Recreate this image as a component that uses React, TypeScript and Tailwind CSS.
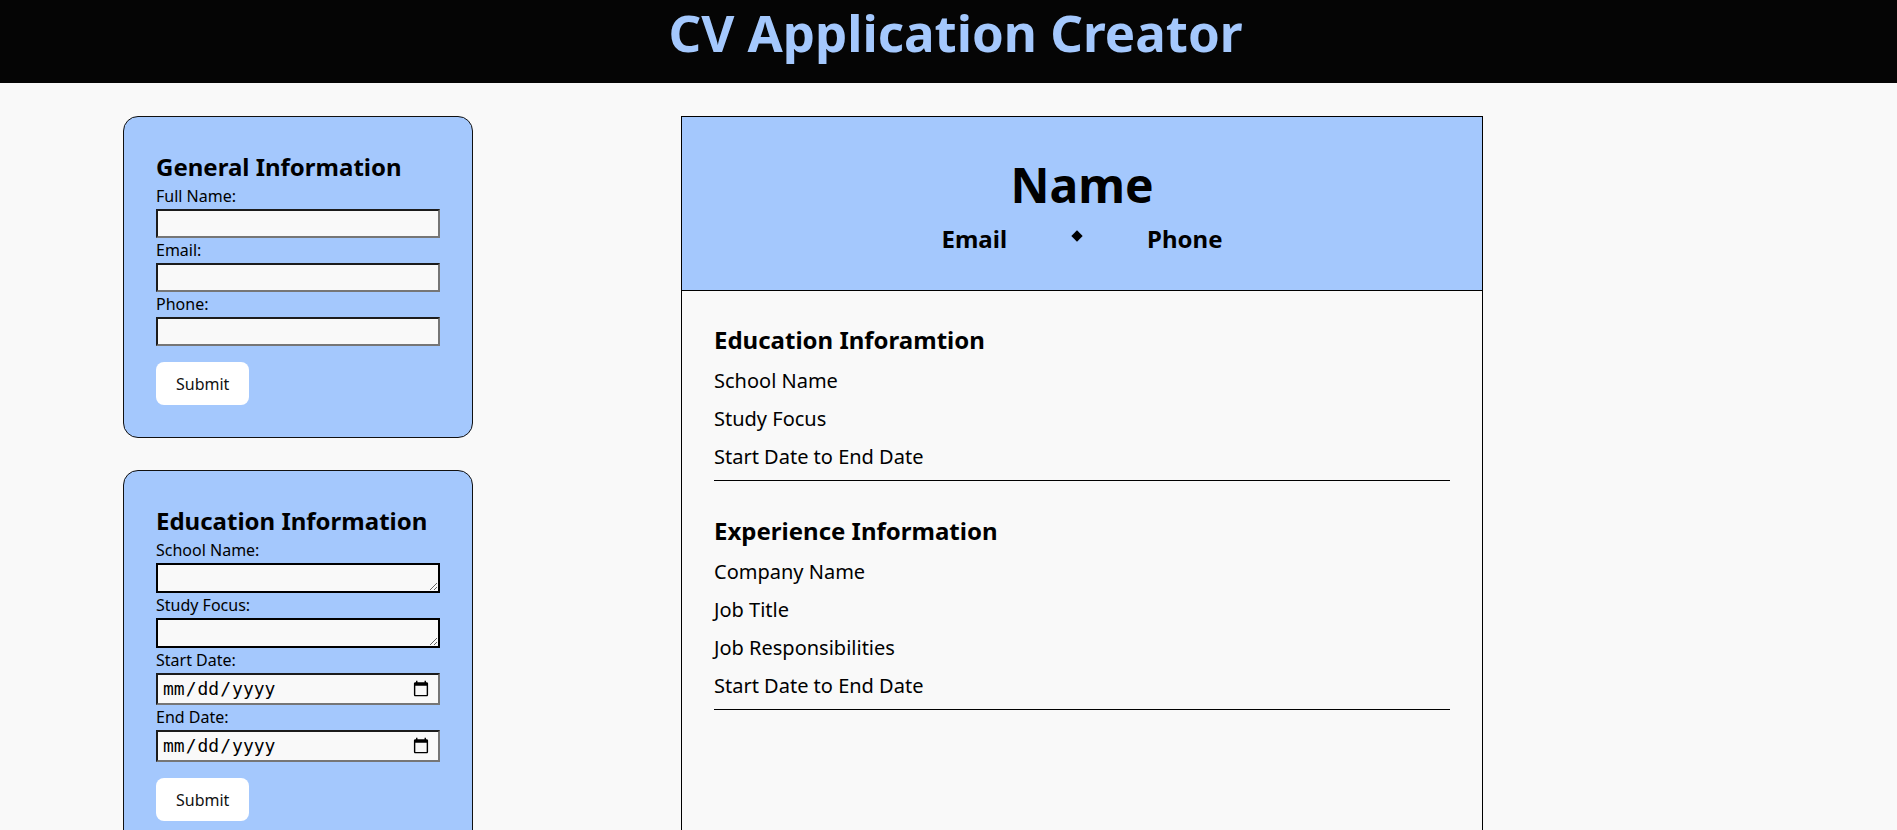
import React from 'react';

const inputClass =
  'block w-full h-[29px] bg-[#f9f9f9] border-2 border-t-[#1c1c1c] border-l-[#1c1c1c] border-b-[#767676] border-r-[#767676] px-1 text-base outline-none';

const textareaClass =
  'block w-full h-[30px] bg-[#f9f9f9] border-2 border-black px-1 text-sm resize-y outline-none font-["DejaVu_Sans_Mono",monospace]';

const dateClass =
  'block w-full h-[32px] bg-[#f9f9f9] border-2 border-t-[#1c1c1c] border-l-[#1c1c1c] border-b-[#767676] border-r-[#767676] pl-[4px] pr-[6px] text-[18px] leading-[22px] outline-none font-["DejaVu_Sans_Mono",monospace]';

function Label({ children }: { children: React.ReactNode }) {
  return <label className="block text-base leading-[25px] text-black">{children}</label>;
}

function SubmitButton() {
  return (
    <button
      type="button"
      className="mt-4 self-start bg-white rounded-lg px-5 h-[43px] text-base text-[#111] leading-[22px]"
    >
      Submit
    </button>
  );
}

function GeneralForm() {
  return (
    <section className="w-[350px] bg-[#a4c8fd] border border-[#111] rounded-[15px] p-8 flex flex-col">
      <h2 className="text-2xl font-bold leading-[35px] text-black">General Information</h2>
      <Label>Full Name:</Label>
      <input type="text" className={inputClass} />
      <Label>Email:</Label>
      <input type="text" className={inputClass} />
      <Label>Phone:</Label>
      <input type="text" className={inputClass} />
      <SubmitButton />
    </section>
  );
}

function EducationForm() {
  return (
    <section className="w-[350px] bg-[#a4c8fd] border border-[#111] rounded-[15px] p-8 flex flex-col">
      <h2 className="text-2xl font-bold leading-[35px] text-black">Education Information</h2>
      <Label>School Name:</Label>
      <textarea rows={1} className={textareaClass} />
      <Label>Study Focus:</Label>
      <textarea rows={1} className={textareaClass} />
      <Label>Start Date:</Label>
      <input type="date" className={dateClass} />
      <Label>End Date:</Label>
      <input type="date" className={dateClass} />
      <SubmitButton />
    </section>
  );
}

function PreviewSection({ title, items }: { title: string; items: string[] }) {
  return (
    <div className="flex flex-col">
      <h3 className="text-2xl font-bold leading-[36px] mb-1">{title}</h3>
      {items.map((item) => (
        <p key={item} className="text-xl leading-[38px]">
          {item}
        </p>
      ))}
      <div className="mt-1 border-b border-black" />
    </div>
  );
}

export default function App() {
  return (
    <div className="min-h-screen bg-[#f9f9f9] text-black font-['Noto_Sans',sans-serif]">
      <header className="h-[83px] bg-[#050505] flex justify-center pl-[14px]">
        <h1 className="mt-[2px] text-[51px] font-bold leading-[60px] text-[#a4c8fd]">
          CV Application Creator
        </h1>
      </header>

      <main className="flex items-start gap-[208px] pl-[123px] pt-[33px] pb-10">
        <div className="flex flex-col gap-8">
          <GeneralForm />
          <EducationForm />
        </div>

        <article className="w-[802px] min-h-[1100px] border border-black bg-[#f9f9f9]">
          <div className="bg-[#a4c8fd] border-b border-black pt-[35px] pb-[35px] flex flex-col items-center gap-[6px]">
            <h2 className="text-5xl font-bold leading-[65px]">Name</h2>
            <div className="flex items-center gap-[66px] text-2xl font-bold">
              <span>Email</span>
              <span className="w-2 h-2 bg-black rotate-45 mb-[7px]" />
              <span>Phone</span>
            </div>
          </div>

          <div className="px-8 pt-[31px] flex flex-col gap-8">
            <PreviewSection
              title="Education Inforamtion"
              items={['School Name', 'Study Focus', 'Start Date to End Date']}
            />
            <PreviewSection
              title="Experience Information"
              items={['Company Name', 'Job Title', 'Job Responsibilities', 'Start Date to End Date']}
            />
          </div>
        </article>
      </main>
    </div>
  );
}
